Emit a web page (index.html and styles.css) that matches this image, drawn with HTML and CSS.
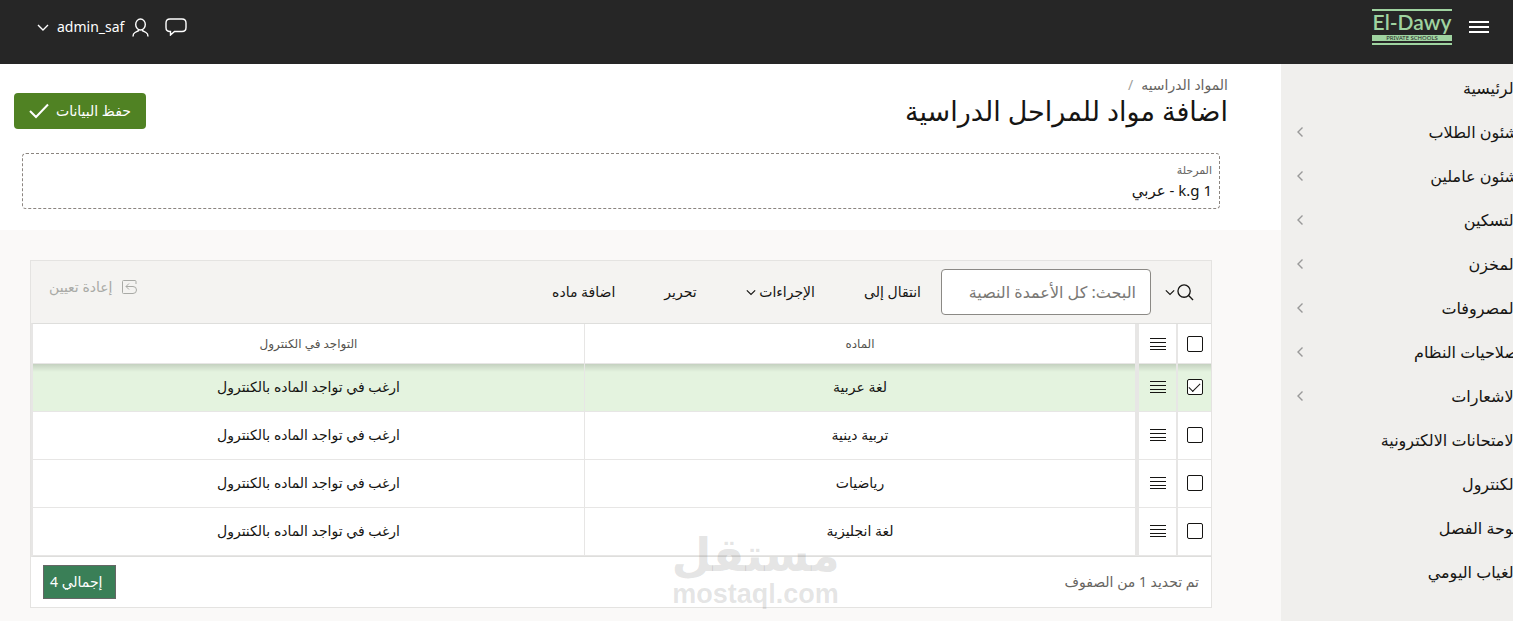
FILE: index.html
```html
<!DOCTYPE html>
<html lang="ar" dir="rtl">
<head>
  <meta charset="utf-8">
  <title>اضافة مواد للمراحل الدراسية</title>
  <link rel="stylesheet" href="styles.css">
</head>
<body>
  <!-- shared icons -->
  <svg class="sprite" aria-hidden="true">
    <symbol id="i-down" viewBox="0 0 12 12"><path d="M1 4l5 5 5-5"/></symbol>
    <symbol id="i-left" viewBox="0 0 8 12"><path d="M6.500 1.500L2 6l4.500 4.500"/></symbol>
    <symbol id="i-rows" viewBox="0 0 16 14"><path d="M0 1.500h16M0 5.500h16M0 9.500h16M0 12.500h16"/></symbol>
  </svg>

  <header class="header">
    <div class="brand">
      <button class="icon-btn" aria-label="القائمة">
        <svg width="20" height="14" viewBox="0 0 20 14"><path d="M0 2h20M0 7h20M0 12h20" stroke-width="2"/></svg>
      </button>
      <a class="logo" href="#" dir="ltr">
        <span class="logo-name">El-Dawy</span>
        <span class="logo-sub">PRIVATE SCHOOLS</span>
      </a>
    </div>
    <div class="user-bar">
      <button class="icon-btn" aria-label="الرسائل">
        <svg width="22" height="18" viewBox="0 0 22 18"><path d="M5 1h12q4 0 4 4v4.500q0 4-4 4H9.500L5.500 17v-3.500H5q-4 0-4-4V5q0-4 4-4z"/></svg>
      </button>
      <button class="icon-btn user">
        <svg width="17" height="19" viewBox="0 0 17 19"><ellipse cx="8.500" cy="6.500" rx="4.800" ry="5.500"/><path d="M6.500 11.500v1.200L3 14.500Q1 15.500 1 18.500M10.500 11.500v1.200l3.500 1.800q2 1 2 4"/></svg>
        <span>admin_saf</span>
        <svg width="12" height="12"><use href="#i-down"/></svg>
      </button>
    </div>
  </header>

  <div class="layout">
    <nav class="sidebar">
      <ul>
        <li><a href="#">الرئيسية</a></li>
        <li><a href="#">شئون الطلاب</a><svg width="8" height="12"><use href="#i-left"/></svg></li>
        <li><a href="#">شئون عاملين</a><svg width="8" height="12"><use href="#i-left"/></svg></li>
        <li><a href="#">التسكين</a><svg width="8" height="12"><use href="#i-left"/></svg></li>
        <li><a href="#">المخزن</a><svg width="8" height="12"><use href="#i-left"/></svg></li>
        <li><a href="#">المصروفات</a><svg width="8" height="12"><use href="#i-left"/></svg></li>
        <li><a href="#">صلاحيات النظام</a><svg width="8" height="12"><use href="#i-left"/></svg></li>
        <li><a href="#">الاشعارات</a><svg width="8" height="12"><use href="#i-left"/></svg></li>
        <li><a href="#">الامتحانات الالكترونية</a></li>
        <li><a href="#">الكنترول</a></li>
        <li><a href="#">لوحة الفصل</a></li>
        <li><a href="#">الغياب اليومي</a></li>
      </ul>
    </nav>

    <main class="main">
      <section class="page-head">
        <div class="title-bar">
          <div>
            <div class="crumbs"><a href="#">المواد الدراسيه</a><span>/</span></div>
            <h1>اضافة مواد للمراحل الدراسية</h1>
          </div>
          <button class="save">
            <span>حفظ البيانات</span>
            <svg width="20" height="16" viewBox="0 0 20 16"><path d="M1 8l6 6L19 1.500" stroke-width="2"/></svg>
          </button>
        </div>
        <div class="stage">
          <span class="stage-label">المرحلة</span>
          <span class="stage-value">k.g 1 - عربي</span>
        </div>
      </section>

      <section class="report">
        <div class="toolbar">
          <button class="search-btn" aria-label="البحث">
            <svg width="17" height="17" viewBox="0 0 18 18"><circle cx="7.500" cy="7.500" r="6.500"/><path d="M12 12l5 5"/></svg>
            <svg width="10" height="10"><use href="#i-down"/></svg>
          </button>
          <input class="search" type="text" aria-label="البحث" placeholder="البحث: كل الأعمدة النصية">
          <div class="actions">
            <button>انتقال إلى</button>
            <button>الإجراءات <svg width="10" height="10"><use href="#i-down"/></svg></button>
            <button>تحرير</button>
            <button>اضافة ماده</button>
          </div>
          <button class="reset" disabled>
            <svg width="15" height="14" viewBox="0 0 15 14"><path d="M14 4V1.500q0-1-1-1H1.500q-1 0-1 1v11q0 1 1 1H11q3.500 0 3.500-3.500T11 6.500H4M7 3.500l-3 3 3 3"/></svg>
            <span>إعادة تعيين</span>
          </button>
        </div>

        <table class="grid">
          <colgroup>
            <col class="col-check">
            <col class="col-menu">
            <col>
            <col>
          </colgroup>
          <thead>
            <tr>
              <th><input type="checkbox" aria-label="تحديد الكل"></th>
              <th><svg width="16" height="14"><use href="#i-rows"/></svg></th>
              <th>الماده</th>
              <th>التواجد في الكنترول</th>
            </tr>
          </thead>
          <tbody>
            <tr class="selected">
              <td><input type="checkbox" aria-label="لغة عربية" checked></td>
              <td><svg width="16" height="14"><use href="#i-rows"/></svg></td>
              <td>لغة عربية</td>
              <td>ارغب في تواجد الماده بالكنترول</td>
            </tr>
            <tr>
              <td><input type="checkbox" aria-label="تربية دينية"></td>
              <td><svg width="16" height="14"><use href="#i-rows"/></svg></td>
              <td>تربية دينية</td>
              <td>ارغب في تواجد الماده بالكنترول</td>
            </tr>
            <tr>
              <td><input type="checkbox" aria-label="رياضيات"></td>
              <td><svg width="16" height="14"><use href="#i-rows"/></svg></td>
              <td>رياضيات</td>
              <td>ارغب في تواجد الماده بالكنترول</td>
            </tr>
            <tr>
              <td><input type="checkbox" aria-label="لغة انجليزية"></td>
              <td><svg width="16" height="14"><use href="#i-rows"/></svg></td>
              <td>لغة انجليزية</td>
              <td>ارغب في تواجد الماده بالكنترول</td>
            </tr>
          </tbody>
        </table>

        <div class="report-foot">
          <span>تم تحديد 1 من الصفوف</span>
          <span class="total">إجمالي 4</span>
        </div>
      </section>
    </main>
  </div>

  <div class="watermark">
    <span class="wm-ar">مستقل</span>
    <span class="wm-en">mostaql.com</span>
  </div>
</body>
</html>
```

FILE: styles.css
```css
* {
  box-sizing: border-box;
}
body {
  margin: 0;
  min-height: 100vh;
  display: flex;
  flex-direction: column;
  font-family: "Noto Sans", "DejaVu Sans", sans-serif;
  font-size: 14px;
  line-height: 20px;
  color: #161513;
  background: #faf9f8;
  overflow-x: hidden;
}
button, input {
  font: inherit;
  color: inherit;
}
button {
  border: none;
  background: none;
  padding: 0;
  cursor: pointer;
}
a {
  color: inherit;
  text-decoration: none;
}
svg {
  fill: none;
  stroke: currentColor;
  stroke-width: 1.4;
  flex: none;
}
.sprite {
  position: absolute;
  width: 0;
  height: 0;
}

/* header */
.header {
  height: 64px;
  padding: 0 24px 10px 37px;
  display: flex;
  align-items: center;
  justify-content: space-between;
  background: #262626;
  color: #ffffff;
}
.brand, .user-bar, .icon-btn {
  display: flex;
  align-items: center;
}
.brand {
  gap: 17px;
}
.user-bar {
  gap: 16px;
}
.user {
  gap: 8px;
}
.logo {
  width: 80px;
  border-top: 2px solid #9fd3a0;
  border-bottom: 2px solid #9fd3a0;
  padding-bottom: 2px;
  color: #9fd3a0;
  display: flex;
  flex-direction: column;
}
.logo-name {
  font-family: Lato, sans-serif;
  font-size: 21px;
  line-height: 22px;
  font-weight: 600;
  padding-bottom: 2px;
  text-align: center;
  white-space: nowrap;
}
.logo-sub {
  background: #9fd3a0;
  color: #262626;
  font-size: 6px;
  line-height: 6px;
  text-align: center;
  white-space: nowrap;
}

.layout {
  flex: 1;
  display: flex;
}

/* side menu, runs a little past the window edge */
.sidebar {
  flex: none;
  width: 232px;
  padding-top: 2px;
  background: #f0efed;
  overflow: hidden;
}
.sidebar ul {
  list-style: none;
  margin: 0 -5px 0 0;
  padding: 0;
}
.sidebar li {
  height: 44px;
  padding-left: 15px;
  display: flex;
  align-items: center;
  justify-content: space-between;
  font-size: 16px;
}
.sidebar svg {
  color: #999999;
}

/* page head */
.main {
  flex: 1;
  min-width: 0;
}
.page-head {
  background: #ffffff;
  padding: 12px 53px 21px 14px;
}
.title-bar {
  display: flex;
  justify-content: space-between;
}
.crumbs {
  display: flex;
  gap: 8px;
  line-height: 18px;
  color: #66645f;
}
.crumbs span {
  color: #a0a09c;
}
h1 {
  margin: 0;
  font-size: 27px;
  line-height: 34px;
  font-weight: normal;
}
.save {
  height: 36px;
  margin-top: 17px;
  padding: 0 15px;
  display: flex;
  align-items: center;
  gap: 7px;
  border-radius: 4px;
  background: #508223;
  color: #ffffff;
}
.stage {
  margin: 24px 8px 0;
  height: 56px;
  padding: 8px 7px;
  display: flex;
  flex-direction: column;
  border: 1px dashed #8b8580;
  border-radius: 4px;
}
.stage-label {
  font-size: 11px;
  line-height: 16px;
  color: #66645f;
}
.stage-value {
  font-size: 15px;
  line-height: 24px;
}

/* report */
.report {
  margin: 30px 69px 13px 30px;
  border: 1px solid #e4e3e1;
  background: #ffffff;
}
.toolbar {
  height: 62px;
  padding: 0 17px 0 18px;
  display: flex;
  align-items: center;
  background: #f4f3f1;
}
.search-btn {
  display: flex;
  align-items: center;
  gap: 2px;
}
.search {
  width: 210px;
  height: 46px;
  margin: 0 14px 0 20px;
  padding: 0 14px;
  border: 1px solid #8b8985;
  border-radius: 4px;
  background: #ffffff;
  font-size: 16px;
}
.search::placeholder {
  color: #7a7875;
  opacity: 1;
}
.actions {
  display: flex;
  gap: 49px;
  font-weight: 500;
}
.reset {
  margin: 0 auto 10px 0;
  display: flex;
  align-items: center;
  gap: 10px;
  color: #a9aaa6;
}
.reset svg {
  stroke-width: 1;
}
.grid {
  width: 100%;
  table-layout: fixed;
  border-collapse: separate;
  border-spacing: 0;
  border-top: 1px solid #dededc;
  border-left: 2px solid #e7e6e5;
  border-bottom: 1px solid #dededc;
}
.col-check {
  width: 35px;
}
.col-menu {
  width: 41px;
}
.grid th, .grid td {
  height: 48px;
  padding: 0 0 1px;
  text-align: center;
  border-left: 1px solid #e7e6e5;
  border-bottom: 1px solid #e7e6e5;
}
.grid th {
  height: 40px;
  padding-bottom: 0;
  font-size: 12px;
  font-weight: normal;
  color: #55534e;
}
.grid th:nth-child(1), .grid td:nth-child(1) {
  border-left-width: 2px;
}
.grid th:nth-child(2), .grid td:nth-child(2) {
  border-left-width: 4px;
}
.grid th:last-child, .grid td:last-child {
  border-left: none;
}
.grid svg, .grid input {
  display: block;
  margin: 0 auto;
  color: #161513;
}
.grid svg {
  stroke-width: 1;
}
.selected td {
  background: #e4f3df linear-gradient(rgba(0, 0, 0, 0.14), rgba(0, 0, 0, 0) 8px);
}
.grid input {
  appearance: none;
  width: 16px;
  height: 16px;
  border: 1px solid #161513;
  border-radius: 2px;
  background: #ffffff;
}
.grid input:checked::before {
  content: "";
  display: block;
  width: 10px;
  height: 5px;
  margin: 3px 2px 0 0;
  border: solid #161513;
  border-width: 0 0 1px 1px;
  rotate: -45deg;
}
.report-foot {
  height: 50px;
  padding: 0 12px;
  display: flex;
  align-items: center;
  justify-content: space-between;
  color: #66645f;
}
.total {
  height: 34px;
  padding: 6px 12px 6px 6px;
  border: 1px solid #666666;
  background: #3a7f57;
  color: #ffffff;
}

/* watermark over the page */
.watermark {
  position: absolute;
  left: 50%;
  top: 530px;
  width: 164px;
  margin-left: -83px;
  display: flex;
  flex-direction: column;
  align-items: center;
  font-weight: bold;
  color: rgba(120, 120, 120, 0.2);
  pointer-events: none;
}
.wm-ar {
  font-family: "DejaVu Sans", sans-serif;
  font-size: 46px;
  line-height: 50px;
}
.wm-en {
  font-family: "Liberation Sans", Arial, sans-serif;
  font-size: 27px;
  line-height: 28px;
}
```
